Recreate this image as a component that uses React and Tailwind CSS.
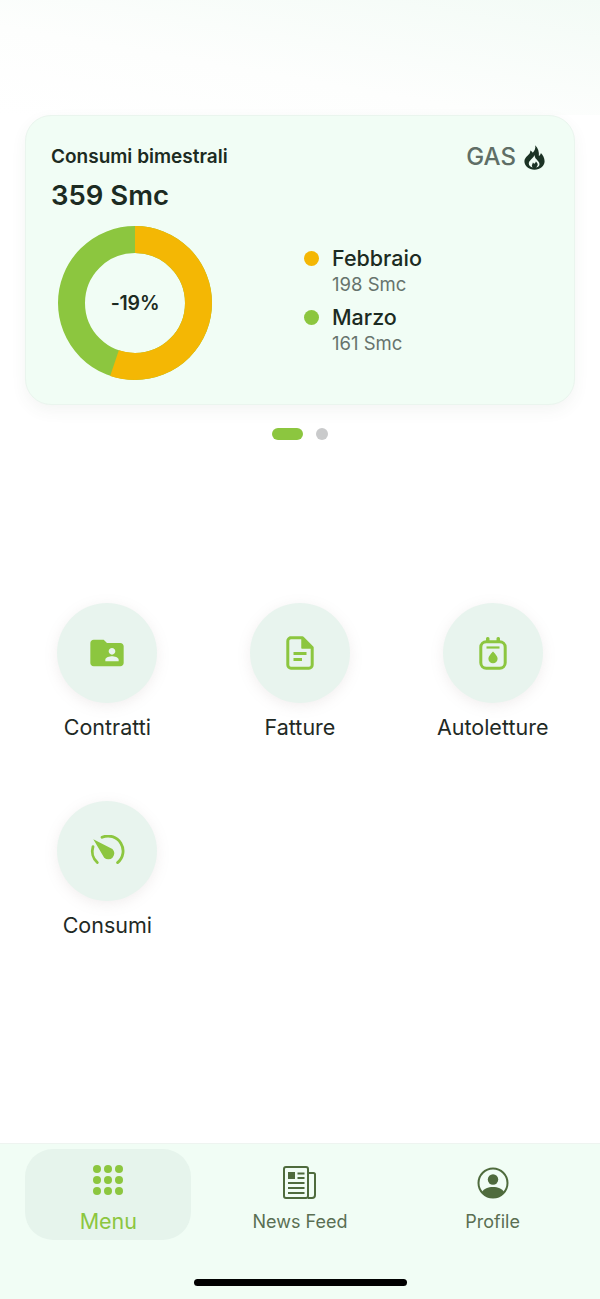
import React from "react";
import { MdFolderShared } from "react-icons/md";

const GREEN = "#8cc63f";
const YELLOW = "#f4b704";

function Donut() {
  const r = 63.5;
  const c = 2 * Math.PI * r;
  const first = c * (198 / 359);
  return (
    <div className="grid place-items-center w-[154px] h-[154px]">
      <svg width="154" height="154" viewBox="0 0 154 154" className="col-start-1 row-start-1">
        <circle cx="77" cy="77" r={r} fill="none" stroke={GREEN} strokeWidth="27" />
        <circle
          cx="77"
          cy="77"
          r={r}
          fill="none"
          stroke={YELLOW}
          strokeWidth="27"
          strokeDasharray={`${first} ${c}`}
          transform="rotate(-90 77 77)"
        />
      </svg>
      <span className="col-start-1 row-start-1 text-[19.5px] leading-6 font-semibold text-[#1c2b22] tracking-[-0.2px]">
        -19%
      </span>
    </div>
  );
}

function LegendRow({ color, name, value }) {
  return (
    <div className="flex items-start">
      <span className={`w-[15px] h-[15px] rounded-full mt-[6px] ${color}`} />
      <div className="ml-[13px]">
        <div className="text-[21.5px] leading-[26px] font-medium text-[#1c2b22]">{name}</div>
        <div className="text-[18.5px] leading-[26px] text-[#66736c]">{value}</div>
      </div>
    </div>
  );
}

function FlameIcon() {
  return (
    <svg width="21" height="25" viewBox="0 0 21 25">
      <path
        fillRule="evenodd"
        fill="#1c3325"
        d="M11.200 0.300C11.900 3.800 10.500 5.800 8.700 7.700 8.200 6.700 7.500 6 6.300 5.500 6.500 7.800 5.300 9.200 3.500 10.800 1.600 12.500 0.400 14.300 0.400 16.300c0 4.800 4.500 8.400 10.100 8.400s10.100-3.600 10.100-8.400c0-3.400-1.600-6-3.700-8.300-.3 1.300-.9 2.300-2 3.100C15.300 6.900 14 3 11.200 0.300ZM10.600 10.800c.4 2.300 1.500 3.200 2.900 4.600 1.700 1.700 2.200 3 1.900 4.500-.4 1.500-2 2.400-3.500 2.500 1.400-1 2-2.200 1.700-3.500-.2-1-1-1.800-1.700-2.500-.3 1.200-1 1.900-1.900 2.400-.2-.6-.6-1-1.100-1.300-.2 1 -.8 1.800-1 2.800-.2 1 .2 1.700 1 2.200-2.400-.4-4.100-2-4.100-4 0-1.500.8-2.600 2-3.800 2.100-1.900 3.600-3.600 3.800-4.900Z"
      />
    </svg>
  );
}

function FattureIcon() {
  return (
    <svg width="28" height="34" viewBox="0 0 28 34" fill="none" stroke={GREEN} strokeWidth="3" strokeLinejoin="round">
      <path d="M4 1.800h12.500L26.200 11.500V29a3.200 3.200 0 0 1-3.200 3.200H5A3.200 3.200 0 0 1 1.800 29V5A3.200 3.200 0 0 1 5 1.800Z" />
      <path d="M16 2v10h10" fill={GREEN} strokeWidth="1.500" />
      <path d="M7.500 17.500h13M7.500 23.500h8.500" />
    </svg>
  );
}

function AutolettureIcon() {
  return (
    <svg width="28" height="34" viewBox="0 0 28 34" fill="none">
      <path d="M7 5V2.500A1.500 1.500 0 0 1 8.500 1h.5A1.500 1.500 0 0 1 10.500 2.500V5M17.500 5V2.500A1.500 1.500 0 0 1 19 1h.5A1.500 1.500 0 0 1 21 2.500V5" fill={GREEN} />
      <rect x="1.800" y="5.800" width="24.400" height="26.400" rx="5.500" stroke={GREEN} strokeWidth="3" />
      <path d="M7.500 11.500h13" stroke={GREEN} strokeWidth="2.200" />
      <path d="M14 15.500c2.800 3 4.600 5 4.600 7.200a4.600 4.600 0 0 1-9.200 0c0-2.200 1.800-4.200 4.600-7.200Z" fill={GREEN} />
    </svg>
  );
}

function ConsumiIcon() {
  return (
    <svg width="36" height="32" viewBox="0 0 36 32" fill="none">
      <path d="M13 2.300A15 15 0 0 1 28.600 27.600" stroke={GREEN} strokeWidth="2.800" strokeLinecap="round" />
      <path d="M4 11.700A15 15 0 0 0 8.300 27.500" stroke={GREEN} strokeWidth="2.800" strokeLinecap="round" />
      <path d="M4.300 4.300 23.400 13.900A6 6 0 0 1 15.200 22.700Z" fill={GREEN} />
    </svg>
  );
}

function NewsIcon() {
  return (
    <svg width="33" height="33" viewBox="0 0 33 33" fill="none" stroke="#4f6b3d" strokeWidth="2">
      <rect x="1" y="1" width="24" height="31" rx="2" />
      <path d="M25 7h5.500A1.500 1.500 0 0 1 32 8.500V29a3 3 0 0 1-3 3h-4" />
      <rect x="5" y="6" width="7" height="7" fill="#4f6b3d" stroke="none" />
      <path d="M14.500 7.500h7M14.500 12h7M5 17h16.500M5 22h16.500M5 27h16.500" />
    </svg>
  );
}

function ProfileIcon() {
  return (
    <svg width="32" height="32" viewBox="0 0 32 32" fill="none">
      <circle cx="16" cy="16" r="14.500" stroke="#4f6b3d" strokeWidth="2" />
      <circle cx="16" cy="12.500" r="5.200" fill="#4f6b3d" />
      <path d="M4.800 25.500C7 21.300 11 20 16 20s9 1.300 11.200 5.500A14.500 14.500 0 0 1 16 31 14.500 14.500 0 0 1 4.800 25.500Z" fill="#4f6b3d" />
    </svg>
  );
}

function Action({ icon, label }) {
  return (
    <div className="flex flex-col items-center">
      <div className="w-[100px] h-[100px] rounded-full bg-[#e8f4ee] flex items-center justify-center shadow-[0_3px_14px_rgba(150,120,120,0.13)]">
        {icon}
      </div>
      <div className="mt-[10px] text-[21.5px] leading-7 text-[#1f2a25] whitespace-nowrap">{label}</div>
    </div>
  );
}

export default function App() {
  return (
    <div className="w-[600px] h-[1299px] flex flex-col overflow-hidden bg-white font-['Inter',sans-serif]">
      <div className="h-[115px] shrink-0 bg-[linear-gradient(190deg,#f3fbf6_0%,#fdfefd_60%,#ffffff_100%)]" />

      <div className="mx-[25px] h-[290px] shrink-0 rounded-[26px] bg-[#f1fdf5] pt-[30px] px-[25px] border border-[#eaf5ee] shadow-[0_6px_16px_rgba(60,90,70,0.06)]">
        <div className="flex justify-between">
          <div className="text-[19px] leading-[22px] font-semibold text-[#1c2b22]">Consumi bimestrali</div>
          <div className="flex items-center gap-[8px] h-[22px] mr-[4px]">
            <span className="text-[24px] leading-[22px] font-medium text-[#5f6e66]">GAS</span>
            <FlameIcon />
          </div>
        </div>
        <div className="mt-[10px] text-[27.5px] leading-[34px] font-semibold text-[#1c2b22]">359 Smc</div>
        <div className="flex items-start mt-[14px] ml-[7px]">
          <Donut />
          <div className="ml-[92px] mt-[19px] flex flex-col gap-[7px]">
            <LegendRow color="bg-[#f4b704]" name="Febbraio" value="198 Smc" />
            <LegendRow color="bg-[#8cc63f]" name="Marzo" value="161 Smc" />
          </div>
        </div>
      </div>

      <div className="flex justify-center items-center gap-[13px] mt-[23px] h-[12px] shrink-0">
        <span className="w-[31px] h-[12px] rounded-full bg-[#8cc63f]" />
        <span className="w-[12px] h-[12px] rounded-full bg-[#c9cacb]" />
      </div>

      <div className="grid grid-cols-3 px-[11px] mt-[163px] gap-y-[60px] flex-1 content-start">
        <Action icon={<MdFolderShared size={40} color={GREEN} />} label="Contratti" />
        <Action icon={<FattureIcon />} label="Fatture" />
        <Action icon={<AutolettureIcon />} label="Autoletture" />
        <Action icon={<ConsumiIcon />} label="Consumi" />
      </div>

      <div className="h-[156px] shrink-0 bg-[#f1fdf5] border-t border-[#eef4f0] relative">
        <div className="grid grid-cols-3 px-[11px] pt-[5px]">
          <div className="justify-self-center ml-[2px] w-[166px] h-[91px] rounded-[28px] bg-[#e6f4ec] flex flex-col items-center pt-[16px]">
            <div className="grid grid-cols-3 gap-x-[3px] gap-y-[3px] w-[30px]">
              {[...Array(9)].map((_, i) => (
                <span key={i} className="w-[8px] h-[8px] rounded-full bg-[#8cc63f]" />
              ))}
            </div>
            <div className="mt-[12px] text-[21.5px] leading-7 text-[#8cc63f]">Menu</div>
          </div>
          <div className="flex flex-col items-center pt-[17px]">
            <NewsIcon />
            <div className="mt-[9px] text-[18px] leading-7 text-[#5a6f52]">News Feed</div>
          </div>
          <div className="flex flex-col items-center pt-[18px]">
            <ProfileIcon />
            <div className="mt-[9px] text-[18px] leading-7 text-[#5a6f52]">Profile</div>
          </div>
        </div>
        <div className="absolute left-[194px] bottom-[13px] w-[213px] h-[7px] rounded-full bg-black" />
      </div>
    </div>
  );
}
